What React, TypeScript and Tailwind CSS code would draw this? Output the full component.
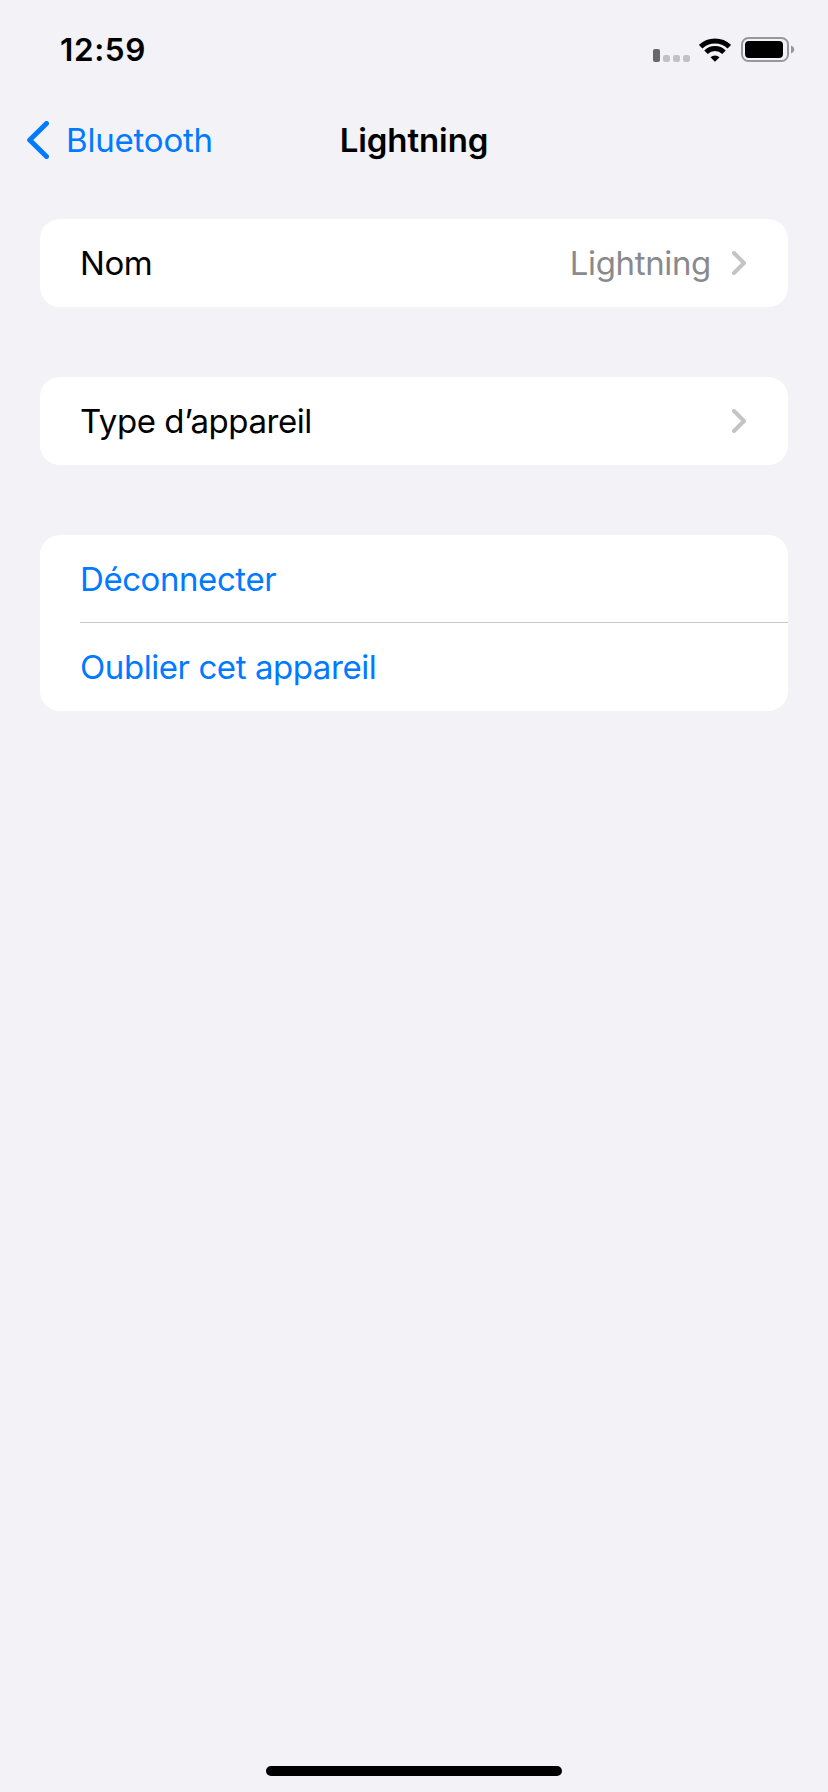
import type { ReactNode } from "react";

const SignalIcon = () => (
  <svg width="37" height="13" viewBox="0 0 37 13">
    <rect x="0" y="0" width="7" height="13" rx="2" fill="#68686b" />
    <rect x="10" y="6" width="7" height="7" rx="2.2" fill="#c2c1c6" />
    <rect x="20" y="6" width="7" height="7" rx="2.2" fill="#c2c1c6" />
    <rect x="30" y="6" width="7" height="7" rx="2.2" fill="#c2c1c6" />
  </svg>
);

const WifiIcon = () => (
  <svg width="32" height="24" viewBox="0 0 32 24" fill="none" stroke="#000">
    <path d="M1.700 8.700a20.600 20.600 0 0 1 28.600 0" strokeWidth="5" />
    <path d="M7 14.200a12.900 12.900 0 0 1 18 0" strokeWidth="5" />
    <path d="M16 23.800l-4.500-4.600a6.500 6.500 0 0 1 9 0z" fill="#000" stroke="none" />
  </svg>
);

const BatteryIcon = () => (
  <svg width="54" height="25" viewBox="0 0 54 25">
    <rect x="1" y="1" width="46" height="23" rx="6.5" fill="none" stroke="#98979b" strokeWidth="2" />
    <rect x="4" y="4" width="38" height="17" rx="4" fill="#000" />
    <path d="M50 8.500c2 .7 3.200 2.200 3.200 4s-1.200 3.300-3.200 4z" fill="#98979b" />
  </svg>
);

const ChevronRight = () => (
  <svg width="14" height="24" viewBox="0 0 14 24" fill="none">
    <path d="M2 2l10 10L2 22" stroke="#c4c4c6" strokeWidth="4" strokeLinecap="round" strokeLinejoin="round" />
  </svg>
);

const Card = ({ children }: { children: ReactNode }) => (
  <section className="overflow-hidden rounded-[20px] bg-white">{children}</section>
);

const Row = ({ label, value }: { label: string; value?: string }) => (
  <button className="flex h-[88px] w-full items-center justify-between pl-10 pr-[42px] text-left">
    <span>{label}</span>
    <span className="flex items-center gap-[21px] tracking-[-0.35px] text-[#8a8a8e]">
      {value}
      <ChevronRight />
    </span>
  </button>
);

const App = () => {
  return (
    <div className="flex h-[1792px] w-[828px] flex-col bg-[#f2f2f7] font-['Inter',sans-serif] text-[33px] leading-[40px] tracking-[-0.43px] text-black">
      <header className="flex h-[99px] items-center justify-between pl-[60px] pr-[33px]">
        <span className="pt-px text-[31.5px] font-semibold tracking-[0.6px]">12:59</span>
        <div className="flex items-center">
          <div className="mr-[9px] pt-[11px]">
            <SignalIcon />
          </div>
          <WifiIcon />
          <div className="ml-[10px]">
            <BatteryIcon />
          </div>
        </div>
      </header>
      <nav className="grid h-[82px] grid-cols-3 items-center">
        <button className="flex items-center gap-[17px] pl-[27px] text-[#007aff]">
          <svg width="22" height="38" viewBox="0 0 22 38" fill="none">
            <path d="M19.500 2.500L2.700 19l16.800 16.500" stroke="#007aff" strokeWidth="5" strokeLinecap="round" strokeLinejoin="round" />
          </svg>
          <span className="tracking-[-0.2px]">Bluetooth</span>
        </button>
        <h1 className="text-center font-semibold tracking-[-0.1px]">Lightning</h1>
      </nav>
      <main className="flex flex-1 flex-col gap-[70px] px-10 pt-[38px]">
        <Card>
          <Row label="Nom" value="Lightning" />
        </Card>
        <Card>
          <Row label="Type d’appareil" />
        </Card>
        <Card>
          <button className="block h-[87px] w-full pl-10 text-left text-[#007aff]">Déconnecter</button>
          <div className="ml-10 h-px bg-[#c6c6c8]" />
          <button className="block h-[88px] w-full pl-10 text-left text-[#007aff]">Oublier cet appareil</button>
        </Card>
      </main>
      <div className="mx-auto mb-4 h-[10px] w-[296px] rounded-full bg-black" />
    </div>
  );
};

export default App;
